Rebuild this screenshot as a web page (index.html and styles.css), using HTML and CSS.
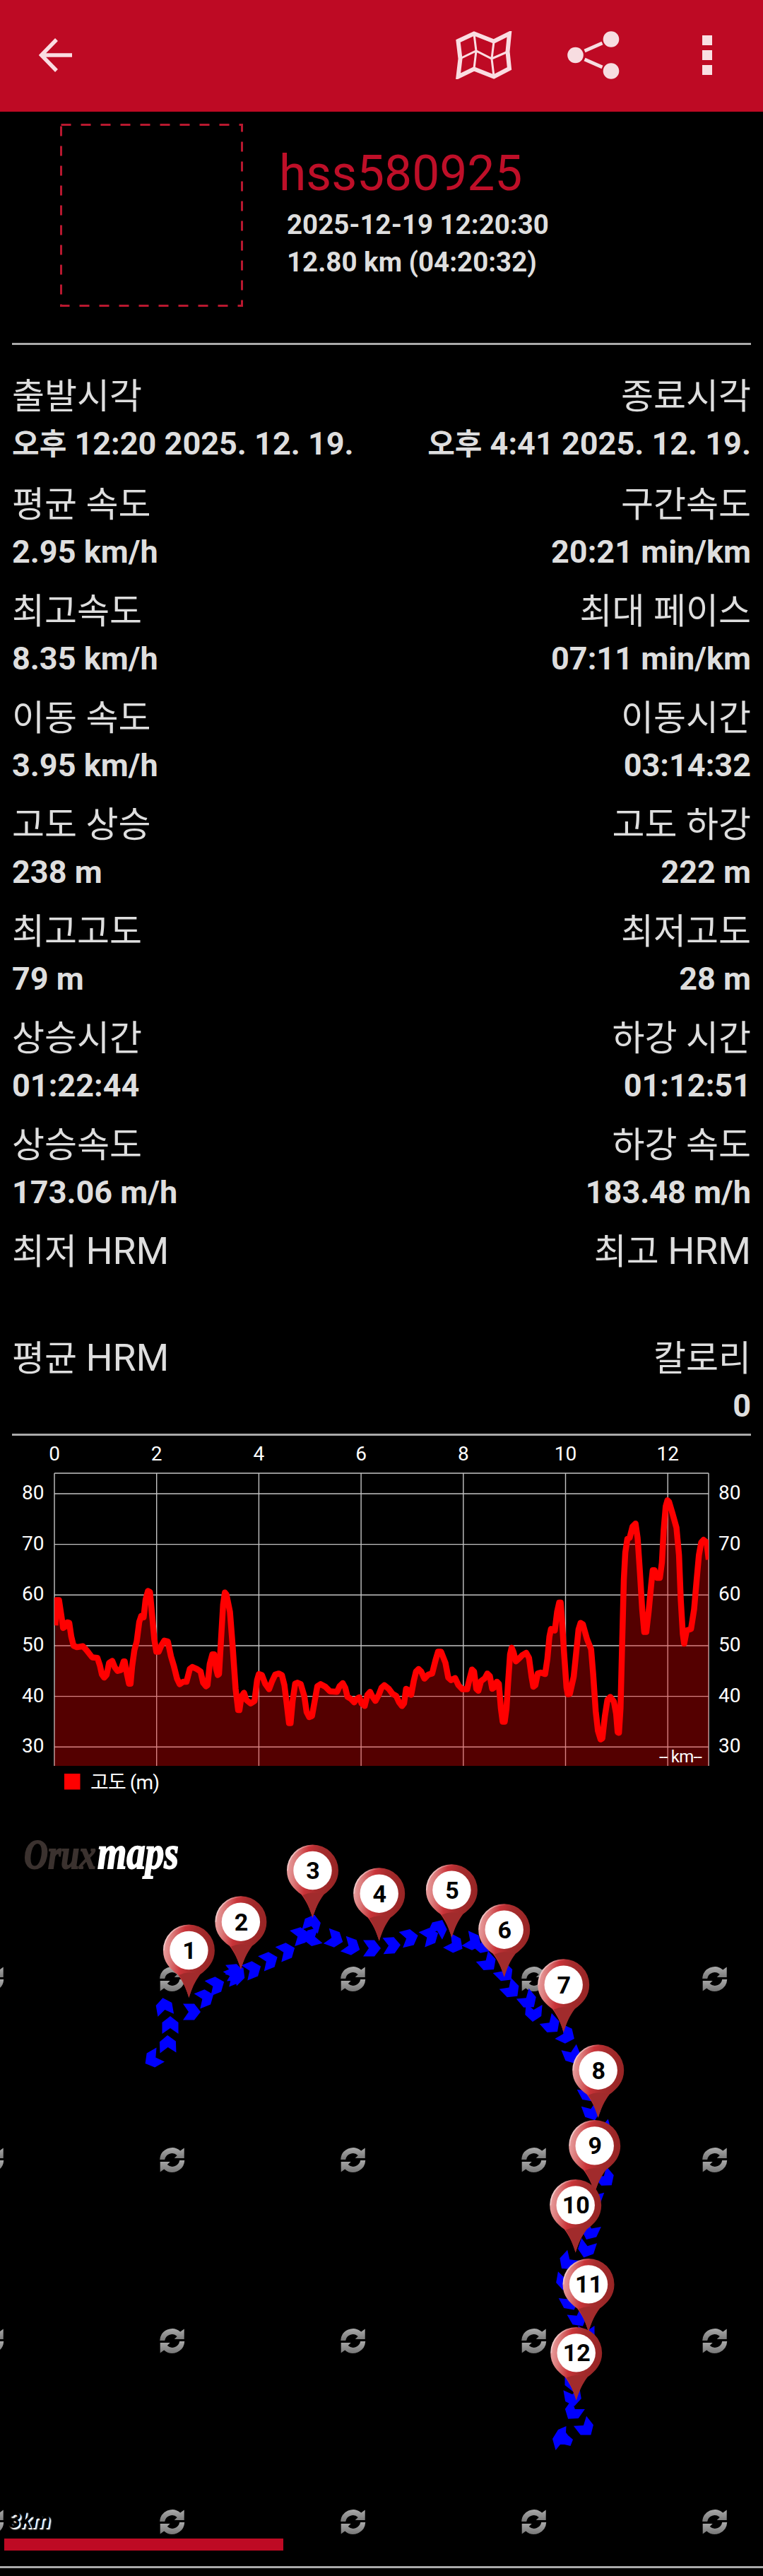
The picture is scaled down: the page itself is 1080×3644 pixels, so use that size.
FILE: index.html
```html
<!DOCTYPE html>
<html lang="ko">
<head>
    <meta charset="UTF-8">
    <meta name="viewport" content="width=device-width, initial-scale=1.0">
    <title>hss580925</title>
    <link rel="stylesheet" href="styles.css">
</head>
<body>
    <header class="toolbar">
        <svg class="icon-back" viewBox="0 0 48 48"><path d="M47 24H4M25 2L3.500 24L25 46"/></svg>
        <div class="toolbar-actions">
            <svg class="icon-map" viewBox="0 0 80 68">
                <path class="outline" d="M3.500 14L26 3.500L54 14.500L76 3.500L73.500 29L76 53L54 64.500L26 53.500L3.500 64.500L6.500 39Z"/>
                <path class="folds" d="M26 4L29 28L26 53M54 15L51 39L54 64M6 39L29 28L51 39L74 29"/>
            </svg>
            <svg class="icon-share" viewBox="0 0 74 68">
                <circle cx="11.500" cy="34" r="11.300"/><circle cx="62" cy="11.500" r="11.300"/><circle cx="62" cy="56.500" r="11.300"/>
                <path d="M24.500 28L49.500 17M24.500 40L49.500 51"/>
            </svg>
            <svg class="icon-more" viewBox="0 0 14 56"><path d="M0 0h14v14H0zM0 21h14v14H0zM0 42h14v14H0z"/></svg>
        </div>
    </header>

    <section class="track-header">
        <svg class="photo" viewBox="0 0 259 259"><rect x="1.500" y="1.500" width="256" height="256"/></svg>
        <div class="track-info">
            <h1>hss580925</h1>
            <p>2025-12-19 12:20:30</p>
            <p>12.80 km (04:20:32)</p>
        </div>
    </section>

    <section class="stats">
        <div class="stat first"><h2>출발시각</h2><p><span>오후</span> 12:20 2025. 12. 19.</p></div>
        <div class="stat first"><h2>종료시각</h2><p><span>오후</span> 4:41 2025. 12. 19.</p></div>
        <div class="stat"><h2>평균 속도</h2><p>2.95 km/h</p></div>
        <div class="stat"><h2>구간속도</h2><p>20:21 min/km</p></div>
        <div class="stat"><h2>최고속도</h2><p>8.35 km/h</p></div>
        <div class="stat"><h2>최대 페이스</h2><p>07:11 min/km</p></div>
        <div class="stat"><h2>이동 속도</h2><p>3.95 km/h</p></div>
        <div class="stat"><h2>이동시간</h2><p>03:14:32</p></div>
        <div class="stat"><h2>고도 상승</h2><p>238 m</p></div>
        <div class="stat"><h2>고도 하강</h2><p>222 m</p></div>
        <div class="stat"><h2>최고고도</h2><p>79 m</p></div>
        <div class="stat"><h2>최저고도</h2><p>28 m</p></div>
        <div class="stat"><h2>상승시간</h2><p>01:22:44</p></div>
        <div class="stat"><h2>하강 시간</h2><p>01:12:51</p></div>
        <div class="stat"><h2>상승속도</h2><p>173.06 m/h</p></div>
        <div class="stat"><h2>하강 속도</h2><p>183.48 m/h</p></div>
        <div class="stat"><h2>최저 <span>HRM</span></h2><p></p></div>
        <div class="stat"><h2>최고 <span>HRM</span></h2><p></p></div>
        <div class="stat"><h2>평균 <span>HRM</span></h2><p></p></div>
        <div class="stat"><h2>칼로리</h2><p>0</p></div>
    </section>

    <svg class="chart" id="chart" viewBox="0 0 1080 529">
        <g id="grid"></g>
        <clipPath id="plot"><rect x="77" y="53" width="926" height="414"/></clipPath>
        <g clip-path="url(#plot)">
            <path id="area" class="area"/>
            <path id="line" class="line"/>
        </g>
        <text class="unit" x="933" y="461.500" textLength="61">-- km--</text>
        <rect class="legend" x="91" y="478" width="22.500" height="22.500"/>
        <text x="128" y="499.500" textLength="98">고도 (m)</text>
    </svg>

    <div class="map">
        <svg viewBox="0 0 1080 1070">
            <defs>
                <linearGradient id="pinFill" x1="0" y1="0.300" x2="1" y2="0.450">
                    <stop offset="0" stop-color="#e9a0a0"/>
                    <stop offset="0.150" stop-color="#dc7c7c"/>
                    <stop offset="0.380" stop-color="#c93338"/>
                    <stop offset="0.600" stop-color="#a62c2d"/>
                    <stop offset="1" stop-color="#962424"/>
                </linearGradient>
                <linearGradient id="pinEdge" x1="0" y1="0" x2="1" y2="0.300">
                    <stop offset="0" stop-color="#fff" stop-opacity="0.800"/>
                    <stop offset="0.500" stop-color="#fff" stop-opacity="0"/>
                </linearGradient>
                <linearGradient id="reloadFill" x1="0" y1="0" x2="0" y2="1">
                    <stop offset="0" stop-color="#aaa"/>
                    <stop offset="1" stop-color="#777"/>
                </linearGradient>
                <path id="arrow" d="M-13 -11.500H3L12 0L3 11.500H-13L-5 0Z"/>
                <g id="pin">
                    <path fill="url(#pinFill)" d="M0 67C-4 54 -9 43 -16 34C-27 26 -36.500 16 -36.500 0A36.500 36.500 0 0 1 36.500 0C36.500 16 27 26 16 34C9 43 4 54 0 67Z"/>
                    <path fill="#a12b2c" d="M0 67C-4 54 -8 43 -14 35Q0 28 14 35C8 43 4 54 0 67Z"/>
                    <path fill="none" stroke="url(#pinEdge)" stroke-width="2" d="M-35.500 0A35.500 35.500 0 0 1 35.500 0"/>
                    <circle r="27.200" fill="#fff"/>
                </g>
                <g id="reload" fill="url(#reloadFill)">
                    <path d="M-17.500 -0.500A17.500 17.500 0 0 1 11.500 -13L17 -17V-2.500H3L7 -6.500A10.500 10.500 0 0 0 -10.500 -0.500Z"/>
                    <path d="M17.500 0.500A17.500 17.500 0 0 1 -11.500 13L-17 17V2.500H-3L-7 6.500A10.500 10.500 0 0 0 10.500 0.500Z"/>
                </g>
            </defs>
            <g id="tiles"></g>
            <g class="logo" transform="translate(34 83) scale(1 1.250)">
                <text class="logo-dark">Orux</text>
                <text class="logo-light" x="104">maps</text>
            </g>
            <g id="track" class="track">
                <path d="M801.500 872L790 877L782 890L786.500 906L793 898L799 898L807.500 900L811 891L804 885L801 881Z"/>
            </g>
            <g id="pins" class="pins"></g>
        </svg>
        <div class="scale">
            <span>3km</span>
            <div class="scale-bar"></div>
        </div>
    </div>

    <script src="script.js"></script>
</body>
</html>
```
FILE: styles.css
```css
body {
    margin: 0;
    background-color: #000;
    color: #dedede;
    font-family: Roboto, "Noto Sans CJK KR", sans-serif;
}

h1, h2, p {
    margin: 0;
}

svg {
    display: block;
}

/* Toolbar */
.toolbar {
    display: flex;
    justify-content: space-between;
    align-items: center;
    box-sizing: border-box;
    height: 158px;
    padding: 0 72px 2px 55px;
    background-color: #be0a24;
}

.toolbar-actions {
    display: flex;
    align-items: center;
}

.icon-back {
    width: 48px;
    height: 48px;
    fill: none;
    stroke: #fadde2;
    stroke-width: 5.5;
}

.icon-map {
    width: 80px;
    height: 68px;
    margin-right: 78px;
    fill: none;
    stroke: #fadde2;
}

.icon-map .outline {
    stroke-width: 6;
}

.icon-map .folds {
    stroke-width: 3;
}

.icon-share {
    width: 74px;
    height: 68px;
    margin-right: 117px;
    fill: #f7dde1;
    stroke: #f7dde1;
}

.icon-share circle {
    stroke: none;
}

.icon-share path {
    stroke-width: 5;
}

.icon-more {
    width: 14px;
    height: 56px;
    fill: #f9dfe3;
}

/* Track title */
.track-header {
    display: flex;
    box-sizing: border-box;
    height: 330px;
    margin: 0 17px;
    padding: 17px 0 0 68px;
    border-bottom: 3px solid #aaa;
}

.photo {
    width: 259px;
    height: 259px;
}

.photo rect {
    fill: none;
    stroke: #b8182f;
    stroke-width: 3;
    stroke-dasharray: 14 14;
}

.track-info {
    padding: 30px 0 0 51px;
}

.track-info h1 {
    color: #be0f28;
    font-size: 69.5px;
    font-weight: 400;
    line-height: 82px;
    margin-bottom: 4px;
}

.track-info p {
    padding-left: 11px;
    font-size: 38.5px;
    font-weight: 700;
    line-height: 53px;
}

/* Stats */
.stats {
    display: grid;
    grid-template-columns: 1fr 1fr;
    margin: 0 17px;
    padding-top: 33px;
    height: 1507px;
    border-bottom: 3px solid #aaa;
}

.stat {
    height: 151px;
    white-space: nowrap;
}

.stat.first {
    height: 153px;
}

.stat:nth-child(even) {
    text-align: right;
}

.stat h2 {
    font-size: 50px;
    font-weight: 400;
    line-height: 80px;
}

.stat h2 span {
    font-size: 53.5px;
    line-height: 1;
}

.stat p {
    margin-top: -3px;
    font-size: 45px;
    font-weight: 700;
    line-height: 60px;
}

.stat p span {
    font-size: 42px;
    line-height: 1;
}

/* Elevation chart */
.chart {
    width: 1080px;
    height: 529px;
}

.chart text {
    fill: #fff;
    font-size: 28px;
}

.chart .unit {
    font-size: 24px;
}

.grid-line {
    stroke: #c4c4c4;
    stroke-width: 1.4;
}

.axis-x {
    text-anchor: middle;
}

.area {
    fill: #f00;
    fill-opacity: 0.33;
}

.line {
    fill: none;
    stroke: #f00;
    stroke-width: 8.5;
    stroke-linejoin: round;
}

.legend {
    fill: #f00;
}

/* Map */
.map {
    position: relative;
    height: 1070px;
    border-bottom: 3px solid #aaa;
}

.logo {
    stroke-width: 1.5;
    font-family: "Liberation Serif", serif;
    font-style: italic;
    font-weight: bold;
}

.logo-dark {
    fill: #3b322f;
    stroke: #3b322f;
    font-size: 47px;
}

.logo-light {
    fill: #fff;
    stroke: #fff;
    font-size: 53px;
}

.track {
    fill: #00f;
}

.pins text {
    font-size: 34px;
    font-weight: 700;
    text-anchor: middle;
}

.scale {
    position: absolute;
    left: 6px;
    bottom: 22px;
}

.scale span {
    display: block;
    padding-left: 6px;
    color: #000;
    font-size: 31px;
    font-style: italic;
    font-weight: bold;
    line-height: 50px;
    text-shadow: 2px 2px 2px #fff, 2px 2px 1px #ccc;
}

.scale-bar {
    width: 395px;
    height: 17px;
    background-color: #be0a24;
}
```
FILE: script.js
```js
const SVG_NS = "http://www.w3.org/2000/svg";

function add(parent, tag, attrs, text) {
    const el = document.createElementNS(SVG_NS, tag);
    for (const name in attrs) {
        el.setAttribute(name, attrs[name]);
    }
    if (text !== undefined) {
        el.textContent = text;
    }
    parent.appendChild(el);
}

// Elevation profile: distance (km), altitude (m)
const profile = [
    [.02,54], [.04,59], [.09,59], [.14,55.7], [.17,53.5], [.22,53.8], [.25,54.6], [.29,54.5], [.33,51.8], [.375,50],
    [.44,49.7], [.555,49.9], [.63,49.1], [.74,47.7], [.84,47.6], [.89,46.1], [.93,44.3], [.975,43.7], [1.02,44.2], [1.07,46.6],
    [1.13,47], [1.185,45.7], [1.235,45], [1.3,45.2], [1.355,46.9], [1.375,46.9], [1.42,44.4], [1.46,42.5], [1.49,42.5], [1.52,45.9],
    [1.565,49.1], [1.61,50.8], [1.66,54.7], [1.7,55.9], [1.745,55.6], [1.785,59.1], [1.83,60.8], [1.87,60.6], [1.91,56.2], [1.955,51.3],
    [1.995,48.8], [2.04,48.8], [2.095,50.1], [2.15,51], [2.22,50.8], [2.28,47.9], [2.335,46.1], [2.4,43.5], [2.45,42.4], [2.52,42.9],
    [2.585,42.9], [2.65,45.4], [2.7,45.8], [2.785,45.4], [2.86,44.9], [2.91,42.7], [2.965,42], [2.995,42.2], [3.04,46.4], [3.09,48.3],
    [3.125,48.3], [3.165,45.4], [3.195,44.2], [3.22,44.4], [3.26,51.3], [3.3,58.1], [3.335,60.5], [3.365,60.1], [3.435,56.7], [3.485,50.3],
    [3.545,41.5], [3.595,37.3], [3.62,37.3], [3.66,40], [3.71,40.7], [3.755,39.3], [3.84,38.6], [3.915,39.1], [3.965,43.2], [4,44.4],
    [4.06,44.2], [4.125,42.5], [4.2,41.4], [4.26,43], [4.32,44.3], [4.39,44.5], [4.45,44.2], [4.5,42.2], [4.545,38.6], [4.59,34.7],
    [4.62,34.7], [4.66,39.1], [4.71,42.5], [4.755,42.7], [4.82,42.4], [4.89,40], [4.935,36.9], [4.985,35.9], [5.04,36.1], [5.1,39.5],
    [5.145,42], [5.21,42.4], [5.3,41.9], [5.39,41], [5.53,40.9], [5.58,42], [5.64,42.6], [5.69,41.7], [5.735,39.9], [5.8,39.5],
    [5.865,38.8], [5.91,39.5], [5.965,39.8], [6.01,38.6], [6.07,38.1], [6.125,40.3], [6.175,40.9], [6.22,40], [6.28,39.1], [6.345,40.3],
    [6.4,41.7], [6.455,42.2], [6.54,41.5], [6.615,40.5], [6.685,40.1], [6.745,38.8], [6.8,38.1], [6.84,38.6], [6.88,41.5], [6.935,41.2],
    [6.98,40.3], [7.03,43], [7.075,44.9], [7.125,45.4], [7.175,44.9], [7.24,43.5], [7.315,44.3], [7.39,44.5], [7.455,47.1], [7.505,48.8],
    [7.565,48.8], [7.65,46.6], [7.705,43.7], [7.76,43.2], [7.84,43.6], [7.905,42.2], [7.98,41.4], [8.075,41.4], [8.125,43.5], [8.17,45.3],
    [8.21,44.9], [8.255,41.5], [8.295,41.1], [8.345,43], [8.425,43.6], [8.47,44.5], [8.52,44], [8.565,41.5], [8.61,41.8], [8.655,42.9],
    [8.695,42.5], [8.735,37.6], [8.77,35], [8.81,35], [8.845,37.6], [8.875,42.5], [8.915,48.3], [8.945,49.6], [8.98,48.8], [9.03,46.9],
    [9.095,47.5], [9.15,48.1], [9.23,48.6], [9.285,47.6], [9.335,43.9], [9.37,41.9], [9.41,42.2], [9.455,44.5], [9.515,44.7], [9.6,44.4],
    [9.645,47.4], [9.685,51.8], [9.715,53.3], [9.79,53], [9.835,56.7], [9.875,58.5], [9.905,58.5], [9.93,55.2], [9.97,48.8], [10.02,41.7],
    [10.045,40.4], [10.085,40.5], [10.16,43.9], [10.21,48.8], [10.255,53.2], [10.295,54.5], [10.34,54.2], [10.42,51.3], [10.5,49.3], [10.54,44.4],
    [10.59,37.1], [10.635,33.2], [10.685,31.5], [10.72,31.7], [10.77,36.1], [10.82,39.3], [10.875,39.9], [10.945,39], [10.99,36.6], [11.02,32.9],
    [11.045,32.8], [11.075,37.6], [11.11,51.3], [11.14,63], [11.17,68.4], [11.21,71.1], [11.255,71.3], [11.31,73.5], [11.37,74.1], [11.41,71.3],
    [11.455,64.5], [11.5,57.2], [11.54,52.7], [11.58,52.7], [11.625,56.7], [11.675,62], [11.705,64.9], [11.74,64.9], [11.79,63.4], [11.845,63.4],
    [11.885,66.4], [11.92,72.8], [11.96,77.5], [11.995,78.7], [12.025,78.4], [12.09,76.2], [12.17,73.3], [12.22,67.9], [12.255,59.1], [12.295,52.3],
    [12.32,50.4], [12.37,53], [12.455,53.3], [12.515,57.2], [12.565,63], [12.61,67.9], [12.655,70.4], [12.7,70.9], [12.76,70.4], [12.8,67]
];

const xPos = km => 77 + km * 72.35;
const yPos = m => 82 + (80 - m) * 7.166;

const grid = document.getElementById("grid");
for (let km = 0; km <= 12; km += 2) {
    add(grid, "line", { class: "grid-line", x1: xPos(km), x2: xPos(km), y1: 53, y2: 467 });
    add(grid, "text", { class: "axis-x", x: xPos(km), y: 35 }, km);
}
add(grid, "line", { class: "grid-line", x1: 1003, x2: 1003, y1: 53, y2: 467 });
add(grid, "line", { class: "grid-line", x1: 77, x2: 1003, y1: 53, y2: 53 });
for (let m = 30; m <= 80; m += 10) {
    add(grid, "line", { class: "grid-line", x1: 77, x2: 1003, y1: yPos(m), y2: yPos(m) });
    add(grid, "text", { x: 31, y: yPos(m) + 8 }, m);
    add(grid, "text", { x: 1017, y: yPos(m) + 8 }, m);
}

const points = profile.map(([km, m]) => xPos(km).toFixed(1) + " " + yPos(m).toFixed(1)).join("L");
document.getElementById("line").setAttribute("d", "M" + points);
document.getElementById("area").setAttribute("d", "M77 467L" + points + "L1003 467Z");

// Placeholder icon of every tile that is not loaded
const tiles = document.getElementById("tiles");
for (let row = 0; row < 4; row++) {
    for (let col = 0; col < 5; col++) {
        add(tiles, "use", { href: "#reload", x: -12.3 + col * 256, y: 239.5 + row * 256 });
    }
}

// Direction arrows: x, y, heading
const arrows = [
    [216,353,150], [237.5,331,-92], [241,304,-90], [232.5,278,-100], [272,286,0], [291,266,-22], [306,248,-22],
    [332,235,-22], [333,230,-5], [336,232,-45], [358,226,-22], [381.5,213,-22], [406,200,-22], [426,178,-18], [441,181,165],
    [442,160,-75], [474,183,20], [498,194,20], [527,196,0], [555,192,-3], [580,181,-14], [609,179,-22],
    [621,167,-65], [644,191,28], [670,187,24], [685,192,40], [691,217,48], [715,232,45], [724,255,46], [748,270,50],
    [755,288,95], [781,305,48], [802,319,25], [810,348,68], [828,376,75], [833,402,62], [838,428,70], [853,453,75],
    [858,522,50], [840,550,110], [835,597,115], [830,622,108], [803,640,132], [799,668,100], [807,697,62], [819,720,60],
    [830,743,90], [811,811,90], [811,832,80], [811,852,125], [829,875,52]
];
const track = document.getElementById("track");
arrows.forEach(([x, y, heading]) => {
    add(track, "use", { href: "#arrow", transform: `translate(${x} ${y}) rotate(${heading})` });
});

// Kilometre pins
const pins = [
    [267.4,199], [340.9,158.7], [442.5,86], [536.7,118.7], [639.4,113.7], [713.7,169.7],
    [797.7,247.7], [846.7,368.7], [841.7,475.4], [814.7,559.4], [833,671.4], [815.7,768.4]
];
const pinLayer = document.getElementById("pins");
pins.forEach(([x, y], i) => {
    add(pinLayer, "use", { href: "#pin", x: x, y: y });
    add(pinLayer, "text", { x: x + 0.5, y: y + 12 }, i + 1);
});
```
